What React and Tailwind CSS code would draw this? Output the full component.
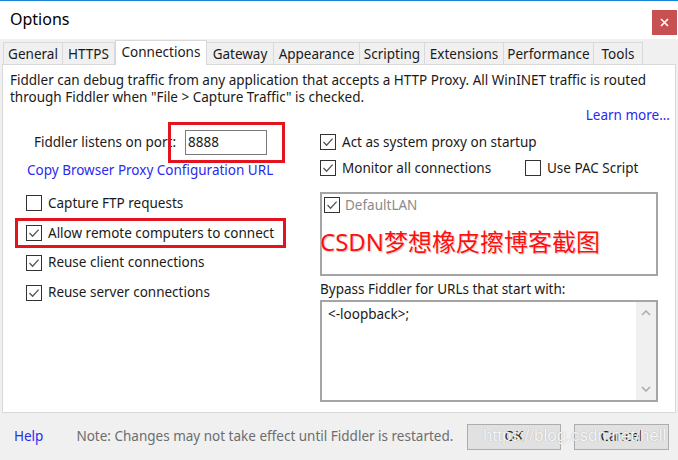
import React from 'react';

const tabs = [
  { label: 'General', w: 'w-[60px]' },
  { label: 'HTTPS', w: 'w-[53px]' },
  { label: 'Connections', w: 'w-[92px]', active: true },
  { label: 'Gateway', w: 'w-[68px]' },
  { label: 'Appearance', w: 'w-[87px]' },
  { label: 'Scripting', w: 'w-[66px]' },
  { label: 'Extensions', w: 'w-[80px]' },
  { label: 'Performance', w: 'w-[91px]' },
  { label: 'Tools', w: 'w-[50px]' },
];

function Box({ checked }) {
  return (
    <span className="flex h-[16px] w-[16px] shrink-0 items-center justify-center border border-[#333333] bg-white">
      {checked && (
        <svg width="12" height="12" viewBox="0 0 12 12">
          <path d="M1.5 6 L4.6 9.3 L10.6 2.6" fill="none" stroke="#555555" strokeWidth="1.3" />
        </svg>
      )}
    </span>
  );
}

function Check({ checked, label, className = '' }) {
  return (
    <div className={`flex items-center gap-[6px] whitespace-nowrap ${className}`}>
      <Box checked={checked} />
      <span>{label}</span>
    </div>
  );
}

export default function App() {
  return (
    <div className="flex h-[460px] w-[678px] flex-col overflow-hidden border-t border-[#1883d7] bg-[#f0f0f0] font-['Noto_Sans',sans-serif] text-[13.5px] text-[#1a1a1a]">
      {/* title bar */}
      <div className="flex h-[38px] shrink-0 items-start justify-between bg-white">
        <div className="pl-[10px] pt-[7px] text-[16px] leading-[22px] text-black">Options</div>
        <button className="mt-[9px] mr-[1px] flex h-[25px] w-[25px] items-center justify-center bg-[#c75050]">
          <svg width="9" height="9" viewBox="0 0 9 9">
            <path d="M1 1 L8 8 M8 1 L1 8" stroke="white" strokeWidth="1.6" />
          </svg>
        </button>
      </div>

      {/* tabs */}
      <div className="flex h-[25px] shrink-0 items-end pl-[3px] pt-[1px] whitespace-nowrap">
        {tabs.map((t) =>
          t.active ? (
            <div
              key={t.label}
              className={`${t.w} relative z-10 -mb-[1px] flex h-[25px] items-start justify-center border border-b-0 border-[#d9d9d9] bg-white pt-[2px] leading-[18px]`}
            >
              {t.label}
            </div>
          ) : (
            <div
              key={t.label}
              className={`${t.w} -ml-[1px] flex h-[22px] items-center justify-center border border-b-0 border-[#d9d9d9] bg-[#f0f0f0] leading-[18px] first:ml-0`}
            >
              {t.label}
            </div>
          )
        )}
      </div>

      {/* content panel */}
      <div className="relative mx-[2px] h-[349px] shrink-0 border border-[#d9d9d9] bg-white">
        <div className="whitespace-nowrap pl-[7px] pt-[7px] leading-[17px]">
          <div>Fiddler can debug traffic from any application that accepts a HTTP Proxy. All WinINET traffic is routed</div>
          <div>through Fiddler when "File &gt; Capture Traffic" is checked.</div>
        </div>
        <div className="flex h-[18px] justify-end pr-[5px] leading-[18px] text-[#2a2af0]">Learn more...</div>

        <div className="flex">
          {/* left column */}
          <div className="w-[315px] shrink-0 pl-[23px]">
            <div className="mt-[6px] flex h-[25px] items-center whitespace-nowrap">
              <span className="w-[150px] shrink-0 pl-[8px]">Fiddler listens on port:</span>
              <div className="ml-[9px] flex h-[25px] w-[82px] items-center border border-[#7a7a7a] pl-[2px]">8888</div>
            </div>
            <div className="mt-[6px] h-[18px] whitespace-nowrap pl-[1px] leading-[18px] text-[#2a2af0]">Copy Browser Proxy Configuration URL</div>
            <Check className="mt-[9px] h-[30px]" label="Capture FTP requests" />
            <Check className="h-[30px]" checked label="Allow remote computers to connect" />
            <Check className="h-[29px]" checked label="Reuse client connections" />
            <Check className="h-[31px]" checked label="Reuse server connections" />
          </div>

          {/* right column */}
          <div className="w-[340px] shrink-0 pl-[2px]">
            <Check className="mt-[5px] h-[26px]" checked label="Act as system proxy on startup" />
            <div className="flex h-[26px] items-center">
              <Check className="w-[205px]" checked label="Monitor all connections" />
              <Check label="Use PAC Script" />
            </div>
            <div className="mt-[11px] h-[84px] w-[338px] border-2 border-[#a5a5a5] pl-[2px] pt-[1px]">
              <div className="flex items-center gap-[5px] text-[#8a8a8a]">
                <Box checked />
                <span>DefaultLAN</span>
              </div>
            </div>
            <div className="mt-[4px] h-[18px] whitespace-nowrap leading-[18px]">Bypass Fiddler for URLs that start with:</div>
            <div className="mt-[2px] flex h-[102px] w-[338px] border-2 border-[#a5a5a5] bg-white">
              <div className="flex-1 pl-[6px] pt-[3px] leading-[18px]">&lt;-loopback&gt;;</div>
              <div className="flex w-[20px] flex-col items-center justify-between bg-[#f0f0f0] py-[8px]">
                <svg width="10" height="6" viewBox="0 0 10 6">
                  <path d="M1 5 L5 1 L9 5" fill="none" stroke="#a6a6a6" strokeWidth="1.4" />
                </svg>
                <svg width="10" height="6" viewBox="0 0 10 6">
                  <path d="M1 1 L5 5 L9 1" fill="none" stroke="#a6a6a6" strokeWidth="1.4" />
                </svg>
              </div>
            </div>
          </div>
        </div>

        {/* highlight overlays */}
        <div className="absolute left-[165px] top-[57px] h-[41px] w-[117px] border-[3px] border-[#e3141d]" />
        <div className="absolute left-[12px] top-[153px] h-[30px] w-[271px] border-[3px] border-[#e3141d]" />
        <div className="absolute left-[317px] top-[161px] whitespace-nowrap font-['Noto_Sans','Noto_Sans_CJK_SC',sans-serif] text-[24px] leading-[32px] text-[#ff1010] [text-shadow:0_0_2px_white,1px_1px_1px_#bbbbbb]">
          CSDN梦想橡皮擦博客截图
        </div>
      </div>

      {/* footer */}
      <div className="relative flex flex-1 items-center whitespace-nowrap">
        <span className="pl-[14px] text-[#2a2af0]">Help</span>
        <span className="pl-[33px] text-[#6d6d6d]">Note: Changes may not take effect until Fiddler is restarted.</span>
        <div className="ml-auto mr-[9px] flex gap-[13px]">
          <button className="h-[26px] w-[94px] border border-[#adadad] bg-[#e1e1e1] text-[13.5px]">OK</button>
          <button className="h-[26px] w-[95px] border border-[#adadad] bg-[#e1e1e1] text-[13.5px]">Cancel</button>
        </div>
        <div className="absolute left-[483px] top-[12px] whitespace-nowrap font-['Liberation_Sans',sans-serif] text-[17px] leading-[22px] text-white/90 [text-shadow:0_0_1px_#999999]">
          https://blog.csdn.net/hell
        </div>
      </div>
    </div>
  );
}
